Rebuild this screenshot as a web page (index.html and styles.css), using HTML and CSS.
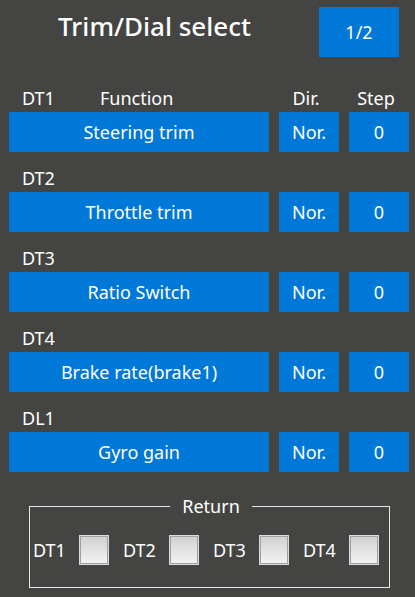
FILE: index.html
```html
<!DOCTYPE html>
<html lang="en">
<head>
    <meta charset="UTF-8">
    <meta name="viewport" content="width=device-width, initial-scale=1.0">
    <title>Trim/Dial select</title>
    <link rel="stylesheet" href="styles.css">
</head>
<body>
    <div id="screen">
        <div class="header">
            <h1 class="title">Trim/Dial select</h1>
            <button class="page-btn">1/2</button>
        </div>

        <div class="group">
            <div class="labels">
                <span class="name">DT1</span>
                <span class="func-head">Function</span>
                <span class="col-head">Dir.</span>
                <span class="col-head">Step</span>
            </div>
            <div class="row">
                <div class="cell">Steering trim</div>
                <div class="cell">Nor.</div>
                <div class="cell">0</div>
            </div>
        </div>

        <div class="group">
            <div class="labels"><span class="name">DT2</span></div>
            <div class="row">
                <div class="cell">Throttle trim</div>
                <div class="cell">Nor.</div>
                <div class="cell">0</div>
            </div>
        </div>

        <div class="group">
            <div class="labels"><span class="name">DT3</span></div>
            <div class="row">
                <div class="cell">Ratio Switch</div>
                <div class="cell">Nor.</div>
                <div class="cell">0</div>
            </div>
        </div>

        <div class="group">
            <div class="labels"><span class="name">DT4</span></div>
            <div class="row">
                <div class="cell">Brake rate(brake1)</div>
                <div class="cell">Nor.</div>
                <div class="cell">0</div>
            </div>
        </div>

        <div class="group">
            <div class="labels"><span class="name">DL1</span></div>
            <div class="row">
                <div class="cell">Gyro gain</div>
                <div class="cell">Nor.</div>
                <div class="cell">0</div>
            </div>
        </div>

        <fieldset class="return-box">
            <legend>Return</legend>
            <div class="checks">
                <label class="check"><span>DT1</span><span class="box"></span></label>
                <label class="check"><span>DT2</span><span class="box"></span></label>
                <label class="check"><span>DT3</span><span class="box"></span></label>
                <label class="check"><span>DT4</span><span class="box"></span></label>
            </div>
        </fieldset>
    </div>
</body>
</html>
```

FILE: styles.css
```css
body {
    margin: 0;
    padding: 0;
    background-color: #444542;
    color: #FFFFFF;
    font-family: "Noto Sans", "Open Sans", sans-serif;
    font-size: 18px;
}
#screen {
    width: 415px;
    height: 597px;
    overflow: hidden;
}
.header {
    display: flex;
    align-items: flex-start;
    height: 72px;
}
.title {
    flex: 1;
    margin: 0;
    padding: 8px 10px 0 0;
    text-align: center;
    font-size: 26px;
    font-weight: 500;
    line-height: 36px;
}
.page-btn {
    width: 80px;
    height: 50px;
    margin: 7px 16px 0 0;
    background: #0078D7;
    color: #FFFFFF;
    border: none;
    font-family: inherit;
    font-size: 18px;
}
.group {
    padding: 14px 6px 0 9px;
}
.labels {
    display: grid;
    grid-template-columns: 78px 182px 70px 70px;
    height: 24px;
    line-height: 24px;
    margin-bottom: 2px;
}
.name {
    padding-left: 13px;
}
.func-head {
    padding-left: 13px;
}
.col-head {
    padding-left: 4px;
    text-align: center;
}
.row {
    display: grid;
    grid-template-columns: 260px 60px 60px;
    column-gap: 10px;
}
.cell {
    height: 40px;
    line-height: 40px;
    background: #0078D7;
    text-align: center;
}
.return-box {
    width: 361px;
    min-width: 0;
    box-sizing: border-box;
    margin: 23px 0 0 29px;
    padding: 18px 0 22px 3px;
    border: 1px solid #E6E6E6;
}
.return-box legend {
    margin: 0 auto;
    padding: 0 12px;
    line-height: 22px;
}
.checks {
    display: grid;
    grid-template-columns: repeat(4, 90px);
}
.check {
    display: grid;
    grid-template-columns: 46px 30px;
    align-items: center;
    height: 30px;
}
.box {
    width: 26px;
    height: 26px;
    margin: 1px;
    border: 1px solid #A0A0A0;
    outline: 1px solid #DCDCDC;
    background: linear-gradient(#D2D2D2, #F2F2F2);
}
```
